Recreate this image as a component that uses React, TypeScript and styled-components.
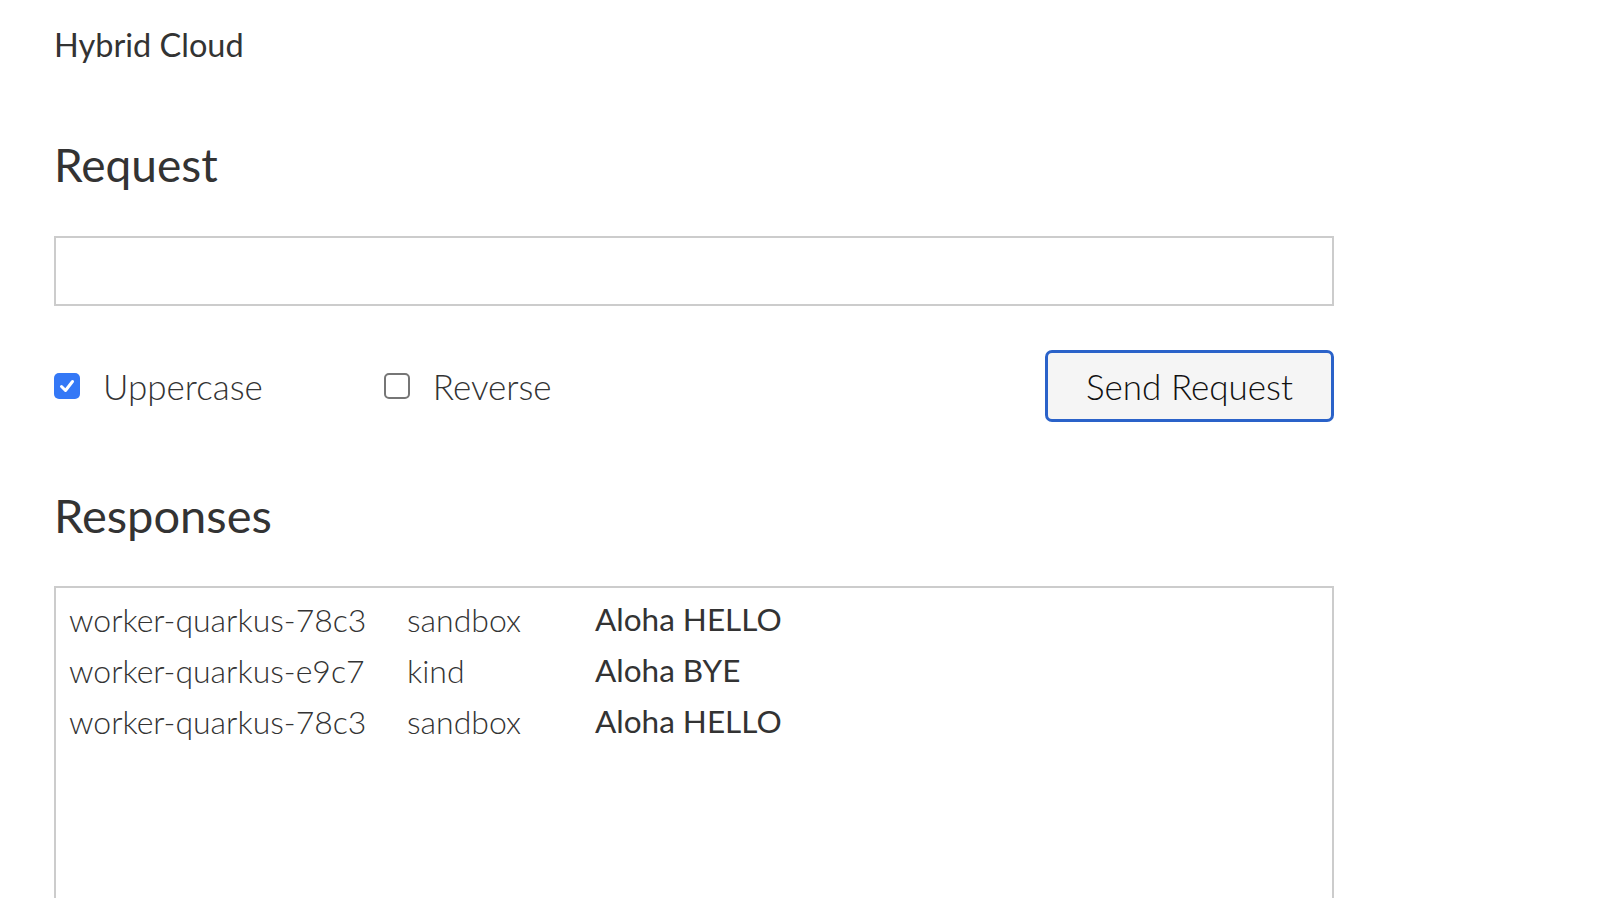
import styled, { createGlobalStyle } from "styled-components";
import { FC } from "react";

const GlobalStyle = createGlobalStyle`
  body {
    margin: 0;
    background: #ffffff;
    font-family: Lato, "Noto Sans", sans-serif;
    color: #333333;
  }
`;

export const Page = styled.main`
  width: 1280px;
  padding: 0 54px;
  display: flex;
  flex-direction: column;
`;

export const Brand = styled.div`
  margin-top: 22px;
  font-size: 32.5px;
  line-height: 46px;
  font-weight: 400;
  color: #333333;
`;

export const Heading = styled.h2<{ gap: number; size: number }>`
  margin: ${(props) => props.gap}px 0 0;
  font-size: ${(props) => props.size}px;
  line-height: 56px;
  font-weight: 400;
  color: #333333;
`;

export const TextInput = styled.input`
  margin-top: 43px;
  box-sizing: border-box;
  width: 100%;
  height: 70px;
  border: 2px solid #cccccc;
  border-radius: 0;
  padding: 0 14px;
  font-family: inherit;
  font-size: 34px;
  outline: none;
`;

export const Controls = styled.div`
  margin-top: 44px;
  height: 72px;
  display: flex;
  align-items: center;
`;

export const Options = styled.div`
  display: flex;
  align-items: center;
  gap: 121px;
`;

export const Option = styled.label`
  display: flex;
  align-items: center;
  gap: 23px;
  font-size: 35px;
  font-weight: 300;
  color: #333333;
  cursor: pointer;
`;

export const Box = styled.span<{ checked: boolean }>`
  box-sizing: border-box;
  width: 26px;
  height: 26px;
  border-radius: 5px;
  display: flex;
  align-items: center;
  justify-content: center;
  background: ${(props) => (props.checked ? "#3478f6" : "#ffffff")};
  border: ${(props) => (props.checked ? "none" : "2px solid #767676")};
`;

export const SendButton = styled.button`
  margin-left: auto;
  box-sizing: border-box;
  width: 289px;
  height: 72px;
  border: 3px solid #2a62c9;
  border-radius: 7px;
  background: #f5f5f5;
  font-family: inherit;
  font-size: 35px;
  font-weight: 300;
  color: #111111;
  cursor: pointer;
`;

export const ResponseBox = styled.div`
  margin-top: 43px;
  box-sizing: border-box;
  min-height: 420px;
  border: 2px solid #cccccc;
  padding: 6px 13px;
`;

export const ResponseRow = styled.div`
  display: grid;
  grid-template-columns: 338px 188px 1fr;
  font-size: 32px;
  line-height: 51px;
`;

export const Cell = styled.span<{ strong?: boolean }>`
  font-weight: ${(props) => (props.strong ? 400 : 300)};
  font-size: ${(props) => (props.strong ? "31.5px" : "32px")};
  color: #333333;
  white-space: nowrap;
`;

interface CheckProps {
  label: string;
  checked: boolean;
}

const Check: FC<CheckProps> = ({ label, checked }) => (
  <Option>
    <Box checked={checked}>
      {checked && (
        <svg width="18" height="18" viewBox="0 0 18 18">
          <path
            d="M3.5 9.5 L7.5 13.5 L14.5 4.5"
            fill="none"
            stroke="#ffffff"
            strokeWidth="3"
            strokeLinecap="round"
            strokeLinejoin="round"
          />
        </svg>
      )}
    </Box>
    {label}
  </Option>
);

const responses = [
  { pod: "worker-quarkus-78c3", cloud: "sandbox", text: "Aloha HELLO" },
  { pod: "worker-quarkus-e9c7", cloud: "kind", text: "Aloha BYE" },
  { pod: "worker-quarkus-78c3", cloud: "sandbox", text: "Aloha HELLO" },
];

export default function App() {
  return (
    <>
      <GlobalStyle />
      <Page>
        <Brand>Hybrid Cloud</Brand>
        <Heading gap={69} size={46}>
          Request
        </Heading>
        <TextInput type="text" />
        <Controls>
          <Options>
            <Check label="Uppercase" checked />
            <Check label="Reverse" checked={false} />
          </Options>
          <SendButton>Send Request</SendButton>
        </Controls>
        <Heading gap={65} size={47}>
          Responses
        </Heading>
        <ResponseBox>
          {responses.map((r, i) => (
            <ResponseRow key={i}>
              <Cell>{r.pod}</Cell>
              <Cell>{r.cloud}</Cell>
              <Cell strong>{r.text}</Cell>
            </ResponseRow>
          ))}
        </ResponseBox>
      </Page>
    </>
  );
}
